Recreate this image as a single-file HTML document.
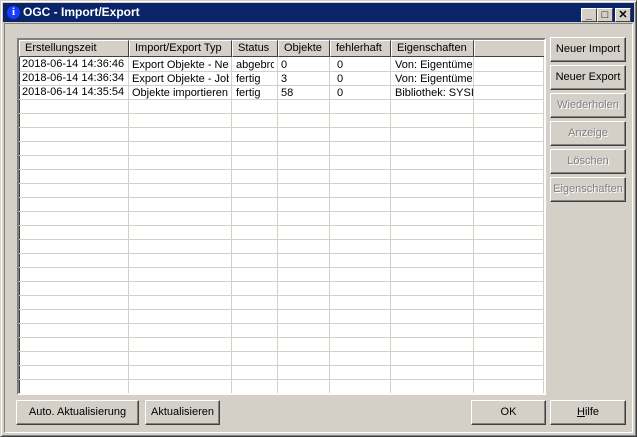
<!DOCTYPE html><html><head><style>
*{box-sizing:border-box;margin:0;padding:0}
body{width:637px;height:437px;background:#d4d0c8;font-family:"Liberation Sans",sans-serif;font-size:11px;position:relative;overflow:hidden}
.win{position:absolute;left:0;top:0;width:637px;height:437px;border:1px solid;border-color:#d4d0c8 #404040 #404040 #d4d0c8;box-shadow:inset 1px 1px #fff,inset -1px -1px #808080}
.title{position:absolute;left:3px;top:3px;width:631px;height:19px;background:#0a246a;color:#fff;font-weight:bold;font-size:12px;line-height:19px;padding-left:20px}
.ico{position:absolute;left:4px;top:3px;width:13px;height:13px;border-radius:50%;background:#1a3cff;color:#fff;font-size:11px;line-height:13px;text-align:center;font-family:"Liberation Serif",serif}
.tb{position:absolute;top:5px;width:16px;height:14px;background:#d4d0c8;border:1px solid;border-color:#fff #404040 #404040 #fff;color:#000;font-size:11px;line-height:12px;text-align:center;font-weight:bold}
.inner{position:absolute;left:4px;top:23px;width:629px;height:410px;border:1px solid;border-color:#808080 #fff #fff #808080}
.list{position:absolute;left:17px;top:38px;width:529px;height:357px;border:2px solid;border-color:#808080 #fff #fff #808080;background:#fff;overflow:hidden;box-shadow:inset 1px 1px #404040}
.hd{position:absolute;top:0;height:17px;background:#d4d0c8;border:1px solid;border-color:#fff #404040 #404040 #fff;padding-left:5px;line-height:15px;white-space:nowrap;overflow:hidden}
.vl{position:absolute;top:17px;bottom:0;width:1px;background:#d4d0c8}
.hl{position:absolute;left:0;right:0;height:1px;background:#d4d0c8}
.c{position:absolute;line-height:13px;white-space:nowrap;overflow:hidden}
.btn{position:absolute;height:25px;background:#d4d0c8;border:1px solid;border-color:#fff #404040 #404040 #fff;box-shadow:inset -1px -1px #808080;text-align:center;line-height:23px;font-size:11px}
.dis{color:#808080;text-shadow:1px 1px #fff}
</style></head><body>
<div class="win"></div>
<div class="title"><div class="ico">i</div>OGC - Import/Export
<div class="tb" style="left:578px">_</div><div class="tb" style="left:594px">□</div><div class="tb" style="left:612px">✕</div></div>
<div class="inner"></div>
<div class="list">
<div class="hd" style="left:0;width:110px">Erstellungszeit</div>
<div class="hd" style="left:110px;width:103px">Import/Export Typ</div>
<div class="hd" style="left:213px;width:46px">Status</div>
<div class="hd" style="left:259px;width:52px">Objekte</div>
<div class="hd" style="left:311px;width:61px">fehlerhaft</div>
<div class="hd" style="left:372px;width:83px">Eigenschaften</div>
<div class="hd" style="left:455px;width:72px"></div>
<div class="vl" style="left:109px"></div><div class="vl" style="left:212px"></div><div class="vl" style="left:258px"></div><div class="vl" style="left:310px"></div><div class="vl" style="left:371px"></div><div class="vl" style="left:454px"></div><div class="vl" style="left:524px"></div>
<div id="rows"></div>
<div class="c" style="left:3px;top:18px">2018-06-14 14:36:46</div>
<div class="c" style="left:3px;top:32px">2018-06-14 14:36:34</div>
<div class="c" style="left:3px;top:46px">2018-06-14 14:35:54</div>
<div class="c" style="left:113px;top:19px;width:97px">Export Objekte - Netz</div>
<div class="c" style="left:113px;top:33px;width:97px">Export Objekte - Job</div>
<div class="c" style="left:113px;top:47px;width:97px">Objekte importieren</div>
<div class="c" style="left:217px;top:19px;width:38px">abgebrochen</div>
<div class="c" style="left:217px;top:33px">fertig</div>
<div class="c" style="left:217px;top:47px">fertig</div>
<div class="c" style="left:262px;top:19px">0</div><div class="c" style="left:262px;top:33px">3</div><div class="c" style="left:262px;top:47px">58</div>
<div class="c" style="left:318px;top:19px">0</div><div class="c" style="left:318px;top:33px">0</div><div class="c" style="left:318px;top:47px">0</div>
<div class="c" style="left:376px;top:19px;width:78px">Von: Eigentümer</div>
<div class="c" style="left:376px;top:33px;width:78px">Von: Eigentümer</div>
<div class="c" style="left:376px;top:47px;width:78px">Bibliothek: SYSIB</div>
</div>
<script>
var r=document.getElementById('rows'),h='';for(var y=31;y<360;y+=14)h+='<div class="hl" style="top:'+y+'px"></div>';r.innerHTML=h;
</script>
<div class="btn" style="left:550px;top:37px;width:76px">Neuer Import</div>
<div class="btn" style="left:550px;top:65px;width:76px">Neuer Export</div>
<div class="btn dis" style="left:550px;top:93px;width:76px">Wiederholen</div>
<div class="btn dis" style="left:550px;top:121px;width:76px">Anzeige</div>
<div class="btn dis" style="left:550px;top:149px;width:76px">Löschen</div>
<div class="btn dis" style="left:550px;top:177px;width:76px">Eigenschaften</div>
<div class="btn" style="left:16px;top:400px;width:123px">Auto. Aktualisierung</div>
<div class="btn" style="left:145px;top:400px;width:75px">Aktualisieren</div>
<div class="btn" style="left:471px;top:400px;width:75px">OK</div>
<div class="btn" style="left:550px;top:400px;width:76px"><u>H</u>ilfe</div>
</body></html>
